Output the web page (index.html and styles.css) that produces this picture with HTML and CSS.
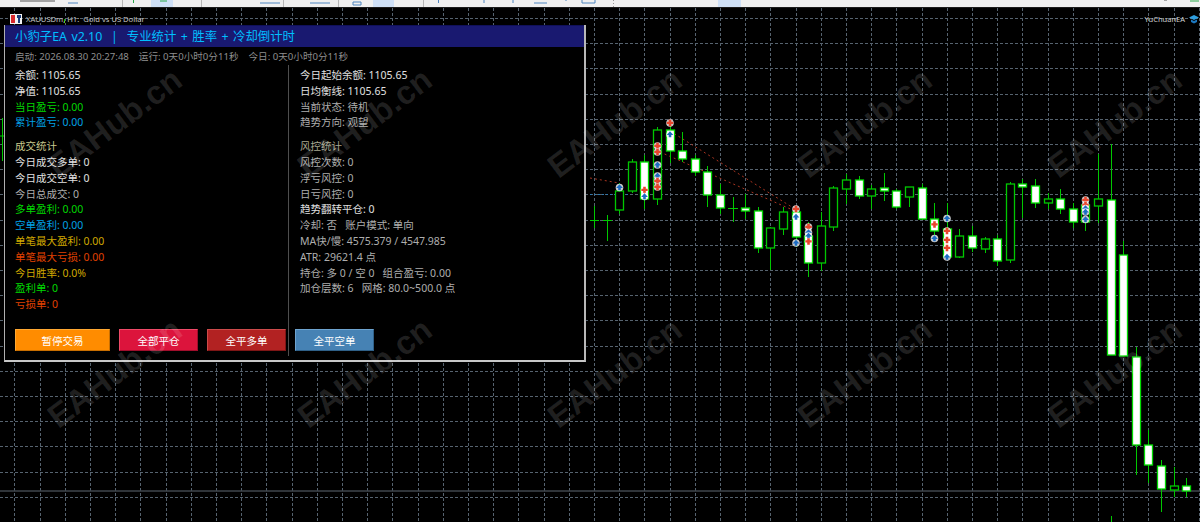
FILE: index.html
```html
<!DOCTYPE html>
<html lang="zh-CN">
<head>
    <meta charset="UTF-8">
    <title>XAUUSDm,H1 - 小豹子EA</title>
    <link rel="stylesheet" href="styles.css">
</head>
<body>
    <!-- Terminal toolbar, only the bottom edge of it is in view -->
    <div class="toolbar">
        <svg class="toolbar-bits" width="1200" height="7" viewBox="0 0 1200 7">
            <rect class="tb-active" x="151" y="0" width="22" height="7"/>
            <rect class="tb-active" x="373" y="0" width="21" height="7"/>
            <rect class="tb-active" x="718" y="0" width="23" height="7"/>
            <path class="tb-sep" d="M122.5 0V7M201.5 0V7M283.5 0V7M338.5 0V7M423.5 0V7"/>
            <path class="tb-dark" d="M20 1H55M1164 0H1167"/>
            <path class="tb-blue" d="M68 3H78M353 2H361V5H353ZM438.5 0V3M484 0V3M513 0V3M534 3H547M565 0H567M582 0V3H595V0M260 3H280M310 3H330"/>
            <path class="tb-green" d="M133.5 0V3M160 1H167M1190 1H1199"/>
            <path class="tb-grip" d="M613.5 0V1M613.5 3V4M613.5 6V7"/>
        </svg>
    </div>

    <div class="chart">
        <svg class="chart-canvas" width="1200" height="514" viewBox="0 8 1200 514">
            <defs>
                <g id="mark-buy">
                    <circle class="halo" r="3.8"/>
                    <path class="buy" d="M0-3.2L3.4 0.5H1.3V2.8H-1.3V0.5H-3.4Z"/>
                </g>
                <g id="mark-sell">
                    <circle class="halo" r="3.8"/>
                    <path class="sell" d="M-1.3-3.2H1.3V-1.3H3.2V1.1H1.3V3.2H-1.3V1.1H-3.2V-1.3H-1.3Z"/>
                </g>
            </defs>

            <!-- grid -->
            <path class="grid" d="M0 18.5H1200M0 43.5H1200M0 68.5H1200M0 94.5H1200M0 119.5H1200M0 144.5H1200M0 169.5H1200M0 194.5H1200M0 220.5H1200M0 245.5H1200M0 270.5H1200M0 295.5H1200M0 320.5H1200M0 346.5H1200M0 371.5H1200M0 396.5H1200M0 421.5H1200M0 446.5H1200M0 472.5H1200M0 497.5H1200"/>
            <path class="grid" d="M14.5 8V522M40.5 8V522M65.5 8V522M90.5 8V522M115.5 8V522M140.5 8V522M166.5 8V522M191.5 8V522M216.5 8V522M241.5 8V522M266.5 8V522M292.5 8V522M317.5 8V522M342.5 8V522M367.5 8V522M392.5 8V522M418.5 8V522M443.5 8V522M468.5 8V522M493.5 8V522M518.5 8V522M544.5 8V522M569.5 8V522M594.5 8V522M619.5 8V522M644.5 8V522M670.5 8V522M695.5 8V522M720.5 8V522M745.5 8V522M770.5 8V522M796.5 8V522M821.5 8V522M846.5 8V522M871.5 8V522M896.5 8V522M922.5 8V522M947.5 8V522M972.5 8V522M997.5 8V522M1022.5 8V522M1048.5 8V522M1073.5 8V522M1098.5 8V522M1123.5 8V522M1148.5 8V522M1174.5 8V522M1199.5 8V522"/>

            <!-- current price line -->
            <path class="price-line" d="M0 491H1200"/>

            <!-- order lines -->
            <path class="trend" d="M590 178L619 183M670 131L795 209M660 152L795 211"/>
            <path class="trend-blue" d="M590 194.5H630M796 243L808 241"/>

            <!-- wicks -->
            <path class="wick" d="M2.5 118V161M0 136H4M64.5 19V23M594.5 206V228M590 220.5H599M607.5 215V241M603 220.5H612M619.5 183V214M632.5 159V193M644.5 155V209M657.5 127V205M670.5 125V163M682.5 132V162M695.5 155V176M707.5 166V207M720.5 184V214M733.5 197V222M728 208.5H738M745.5 194V219M758.5 207V253M770.5 227V270M783.5 207V235M796.5 207V247M808.5 222V277M821.5 212V271M833.5 186V231M846.5 174V204M859.5 176V199M871.5 185V209M884.5 173V201M896.5 189V209M909.5 187V207M922.5 184V220M934.5 203V237M947.5 203V260M959.5 229V258M972.5 226V252M985.5 237V253M997.5 235V266M1010.5 182V263M1022.5 179V218M1035.5 179V208M1048.5 193V209M1060.5 189V214M1073.5 203V228M1085.5 198V231M1098.5 154V223M1111.5 144V347M1111.5 516V522M1123.5 241V257M1136.5 347V475M1148.5 430V483M1161.5 460V512M1174.5 467V497M1186.5 478V497"/>

            <!-- bodies -->
            <rect class="up" x="615.5" y="191" width="8" height="19"/>
            <rect class="up" x="628.5" y="162" width="8" height="29"/>
            <rect class="dn" x="640.5" y="162" width="8" height="37"/>
            <rect class="up" x="653.5" y="130" width="8" height="69"/>
            <rect class="dn" x="666.5" y="130" width="8" height="21"/>
            <rect class="dn" x="678.5" y="151" width="8" height="8"/>
            <rect class="dn" x="691.5" y="159" width="8" height="13"/>
            <rect class="dn" x="703.5" y="172" width="8" height="23"/>
            <rect class="dn" x="716.5" y="195" width="8" height="13"/>
            <rect class="dn" x="741.5" y="208" width="8" height="3"/>
            <rect class="dn" x="754.5" y="211" width="8" height="37"/>
            <rect class="up" x="766.5" y="228" width="8" height="20"/>
            <rect class="up" x="779.5" y="212" width="8" height="17"/>
            <rect class="dn" x="792.5" y="212" width="8" height="25"/>
            <rect class="dn" x="804.5" y="236" width="8" height="27"/>
            <rect class="up" x="817.5" y="226" width="8" height="37"/>
            <rect class="up" x="829.5" y="188" width="8" height="39"/>
            <rect class="up" x="842.5" y="180" width="8" height="9"/>
            <rect class="dn" x="855.5" y="180" width="8" height="16"/>
            <rect class="up" x="867.5" y="189" width="8" height="7"/>
            <rect class="dn" x="880.5" y="188" width="8" height="3"/>
            <rect class="dn" x="892.5" y="191" width="8" height="16"/>
            <rect class="up" x="905.5" y="187" width="8" height="10"/>
            <rect class="dn" x="918.5" y="188" width="8" height="31"/>
            <rect class="dn" x="930.5" y="219" width="8" height="12"/>
            <rect class="dn" x="943.5" y="229" width="8" height="28"/>
            <rect class="up" x="955.5" y="236" width="8" height="21"/>
            <rect class="dn" x="968.5" y="236" width="8" height="12"/>
            <rect class="up" x="981.5" y="239" width="8" height="10"/>
            <rect class="dn" x="993.5" y="239" width="8" height="22"/>
            <rect class="up" x="1006.5" y="184" width="8" height="76"/>
            <rect class="dn" x="1018.5" y="184" width="8" height="3"/>
            <rect class="dn" x="1031.5" y="186" width="8" height="17"/>
            <rect class="up" x="1044.5" y="199" width="8" height="4"/>
            <rect class="dn" x="1056.5" y="199" width="8" height="10"/>
            <rect class="dn" x="1069.5" y="209" width="8" height="13"/>
            <rect class="up" x="1081.5" y="205" width="8" height="17"/>
            <rect class="up" x="1094.5" y="199" width="8" height="7"/>
            <rect class="dn" x="1107.5" y="200" width="8" height="155"/>
            <rect class="dn" x="1119.5" y="255" width="8" height="101"/>
            <rect class="dn" x="1132.5" y="357" width="8" height="88"/>
            <rect class="dn" x="1144.5" y="445" width="8" height="20"/>
            <rect class="dn" x="1157.5" y="466" width="8" height="23"/>
            <rect class="up" x="1170.5" y="486" width="8" height="4"/>
            <rect class="dn" x="1182.5" y="486" width="8" height="5"/>

            <!-- trade arrows -->
            <use href="#mark-buy" x="619.5" y="187.5"/>
            <use href="#mark-sell" x="644.5" y="190"/>
            <use href="#mark-buy" x="644.5" y="196.5"/>
            <use href="#mark-sell" x="657.5" y="146"/>
            <use href="#mark-sell" x="657.5" y="152"/>
            <use href="#mark-buy" x="657.5" y="165"/>
            <use href="#mark-buy" x="657.5" y="176"/>
            <use href="#mark-sell" x="657.5" y="181"/>
            <use href="#mark-sell" x="657.5" y="187"/>
            <use href="#mark-sell" x="670" y="123"/>
            <use href="#mark-buy" x="670" y="134.5"/>
            <use href="#mark-sell" x="796" y="209"/>
            <use href="#mark-buy" x="796" y="217"/>
            <use href="#mark-buy" x="796" y="243"/>
            <use href="#mark-sell" x="808.5" y="227"/>
            <use href="#mark-buy" x="808.5" y="232.5"/>
            <use href="#mark-buy" x="808.5" y="236"/>
            <use href="#mark-sell" x="808.5" y="241.5"/>
            <use href="#mark-sell" x="934.5" y="224.5"/>
            <use href="#mark-buy" x="934.5" y="238.5"/>
            <use href="#mark-buy" x="947" y="218.5"/>
            <use href="#mark-sell" x="947" y="231"/>
            <use href="#mark-sell" x="947" y="240"/>
            <use href="#mark-sell" x="947" y="248"/>
            <use href="#mark-buy" x="947" y="257"/>
            <use href="#mark-sell" x="1085.5" y="200"/>
            <use href="#mark-sell" x="1085.5" y="205"/>
            <use href="#mark-buy" x="1085.5" y="208.5"/>
            <use href="#mark-buy" x="1085.5" y="212"/>
            <use href="#mark-buy" x="1085.5" y="219.5"/>
        </svg>

        <!-- chart title -->
        <div class="chart-title">
            <svg class="chart-icon" width="12" height="10" viewBox="0 0 12 10">
                <rect width="12" height="10" fill="#f2f2f2"/>
                <rect x="1" y="1" width="4" height="8" fill="#d8282c"/>
                <rect x="7" y="1" width="4" height="3" fill="#1a3a78"/>
                <rect x="8" y="4" width="2" height="5" fill="#1a3a78"/>
            </svg>
            <span>XAUUSDm, H1:&nbsp; Gold vs US Dollar</span>
        </div>

        <!-- EA name, top right -->
        <div class="ea-tag">
            <span>YuChuanEA</span>
            <svg width="10" height="10" viewBox="0 0 10 10">
                <path d="M0 3.5L5 1L10 3.5L5 6Z" fill="#2f9fe0"/>
                <path d="M2 5.5V8L5 9.5L8 8V5.5L5 7Z" fill="#1c78c0"/>
            </svg>
        </div>

        <!-- EA panel -->
        <div class="panel">
            <div class="panel-header">小豹子EA v2.10&nbsp; |&nbsp; 专业统计 + 胜率 + 冷却倒计时</div>
            <div class="panel-meta">
                <span>启动: 2026.08.30 20:27:48</span>
                <span>运行: 0天0小时0分11秒</span>
                <span>今日: 0天0小时0分11秒</span>
            </div>
            <div class="panel-main">
                <div class="columns">
                    <div class="col">
                        <div class="group">
                            <p class="white">余额: 1105.65</p>
                            <p class="white">净值: 1105.65</p>
                            <p class="green">当日盈亏: 0.00</p>
                            <p class="blue">累计盈亏: 0.00</p>
                        </div>
                        <div class="group">
                            <p class="khaki">成交统计</p>
                            <p class="white">今日成交多单: 0</p>
                            <p class="white">今日成交空单: 0</p>
                            <p class="silver">今日总成交: 0</p>
                            <p class="green">多单盈利: 0.00</p>
                            <p class="blue">空单盈利: 0.00</p>
                            <p class="gold">单笔最大盈利: 0.00</p>
                            <p class="red">单笔最大亏损: 0.00</p>
                            <p class="gold">今日胜率: 0.0%</p>
                            <p class="green">盈利单: 0</p>
                            <p class="red">亏损单: 0</p>
                        </div>
                    </div>
                    <div class="col">
                        <div class="group">
                            <p class="white">今日起始余额: 1105.65</p>
                            <p class="white">日均衡线: 1105.65</p>
                            <p class="silver">当前状态: 待机</p>
                            <p class="silver">趋势方向: 观望</p>
                        </div>
                        <div class="group">
                            <p class="khaki-dim">风控统计</p>
                            <p class="silver">风控次数: 0</p>
                            <p class="silver">浮亏风控: 0</p>
                            <p class="silver">日亏风控: 0</p>
                            <p class="white">趋势翻转平仓: 0</p>
                            <p class="silver">冷却: 否 &nbsp; 账户模式: 单向</p>
                            <p class="silver">MA快/慢: 4575.379 / 4547.985</p>
                            <p class="silver">ATR: 29621.4 点</p>
                            <p class="silver">持仓: 多 0 / 空 0 &nbsp; 组合盈亏: 0.00</p>
                            <p class="silver">加仓层数: 6 &nbsp; 网格: 80.0~500.0 点</p>
                        </div>
                    </div>
                </div>
                <div class="actions">
                    <button class="btn btn-pause">暂停交易</button>
                    <button class="btn btn-close-all">全部平仓</button>
                    <button class="btn btn-close-long">全平多单</button>
                    <button class="btn btn-close-short">全平空单</button>
                </div>
            </div>
        </div>

        <!-- site watermark, sits on top of everything -->
        <div class="watermarks">
            <span>EAHub.cn</span><span>EAHub.cn</span><span>EAHub.cn</span><span>EAHub.cn</span><span>EAHub.cn</span>
            <span>EAHub.cn</span><span>EAHub.cn</span><span>EAHub.cn</span><span>EAHub.cn</span><span>EAHub.cn</span>
        </div>
    </div>
</body>
</html>
```

FILE: styles.css
```css
html, body {
    margin: 0;
    height: 100%;
    overflow: hidden;
    background: #000;
}
body {
    display: flex;
    flex-direction: column;
    font-family: "Noto Sans", "Noto Sans CJK SC", sans-serif;
}
p {
    margin: 0;
}

/* toolbar */
.toolbar {
    height: 7px;
    background: #f0f0f0;
    border-bottom: 1px solid #1c1c1c;
    flex: none;
}
.toolbar-bits {
    display: block;
}
.tb-active { fill: #cfe0f6; }
.tb-sep { stroke: #b8b8b8; fill: none; }
.tb-dark { stroke: #555; fill: none; }
.tb-blue { stroke: #4f86c0; fill: none; }
.tb-green { stroke: #2aa84a; fill: none; }
.tb-grip { stroke: #999; fill: none; }

/* chart */
.chart {
    position: relative;
    flex: 1;
    overflow: hidden;
}
.chart-canvas {
    display: block;
}
.grid {
    stroke: #56636f;
    stroke-width: 1;
    stroke-dasharray: 3 2;
    fill: none;
}
.price-line {
    stroke: #3f464d;
    stroke-width: 1.5;
}
.trend {
    stroke: #a83420;
    stroke-dasharray: 2 3;
    fill: none;
}
.trend-blue {
    stroke: #2f78ac;
    stroke-dasharray: 2 2;
    fill: none;
}
.wick {
    stroke: #00c800;
    fill: none;
}
.up {
    fill: #000;
    stroke: #00c800;
    stroke-width: 1.3;
}
.dn {
    fill: #fff;
    stroke: #00dc00;
    stroke-width: 1.3;
}
.halo {
    fill: rgba(255, 255, 255, 0.8);
}
.buy { fill: #1c6cc4; }
.sell { fill: #e8452c; }

.chart-title {
    position: absolute;
    left: 10px;
    top: 6px;
    display: flex;
    align-items: center;
    gap: 4px;
    font-size: 7.6px;
    line-height: 10px;
    color: #c4c4c4;
}
.ea-tag {
    position: absolute;
    right: 1px;
    top: 6px;
    display: flex;
    align-items: center;
    gap: 4px;
    font-size: 7.5px;
    line-height: 10px;
    color: #d0d0d0;
}

/* EA panel */
.panel {
    position: absolute;
    left: 4px;
    top: 17px;
    width: 582px;
    height: 337px;
    box-sizing: border-box;
    display: flex;
    flex-direction: column;
    background: #000;
    border-left: 1px solid #b0b0b0;
    border-right: 2px solid #b8b8b8;
    border-bottom: 2px solid #c8c8c8;
}
.panel-header {
    height: 22px;
    line-height: 21px;
    padding-left: 10px;
    background: #191970;
    border-top: 1px solid #10105a;
    box-sizing: border-box;
    color: #00bfff;
    font-size: 12.4px;
    word-spacing: 1.2px;
    white-space: pre;
}
.panel-meta {
    display: flex;
    gap: 10px;
    height: 16px;
    margin-top: 2px;
    padding-left: 10px;
    font-size: 9.6px;
    line-height: 16px;
    color: #8e8e8e;
}
.panel-main {
    flex: 1;
    display: flex;
    flex-direction: column;
    justify-content: space-between;
    padding: 3px 0 5px 10px;
    margin-bottom: 4px;
    background: linear-gradient(#4e4e4e, #4e4e4e) 283px 0 / 1px 100% no-repeat;
}
.columns {
    display: grid;
    grid-template-columns: 285px 1fr;
    font-size: 10.5px;
    line-height: 15.8px;
}
.group + .group {
    margin-top: 8px;
}
.white { color: #e0e0e0; }
.silver { color: #aeaeae; }
.green { color: #00d800; }
.blue { color: #00a0e6; }
.khaki { color: #c8c88c; }
.khaki-dim { color: #a8a890; }
.gold { color: #d0a800; }
.red { color: #e04000; }

.actions {
    display: flex;
    gap: 9px;
}
.btn {
    width: 79px;
    height: 22px;
    padding: 0;
    box-sizing: border-box;
    border: 1px solid;
    border-radius: 0;
    color: #fff;
    font-family: inherit;
    font-size: 10.5px;
}
.btn-pause {
    width: 95px;
    background: #ff8c00;
    border-color: #ffa832 #c86e00 #c86e00 #ffa832;
}
.btn-close-all {
    background: #dc143c;
    border-color: #f04a68 #a00e2c #a00e2c #f04a68;
}
.btn-close-long {
    background: #b22222;
    border-color: #cc4a4a #7e1616 #7e1616 #cc4a4a;
}
.btn-close-short {
    background: #4682b4;
    border-color: #6ea4d0 #2f6088 #2f6088 #6ea4d0;
}

/* watermark */
.watermarks {
    position: absolute;
    left: -10px;
    top: -10px;
    display: grid;
    grid-template-columns: repeat(5, 250px);
    grid-template-rows: repeat(2, 250px);
    place-items: center;
    pointer-events: none;
}
.watermarks span {
    transform: rotate(-37deg);
    font-family: "Liberation Sans", sans-serif;
    font-weight: bold;
    font-size: 33px;
    white-space: nowrap;
    color: rgba(255, 255, 255, 0.13);
}
```
